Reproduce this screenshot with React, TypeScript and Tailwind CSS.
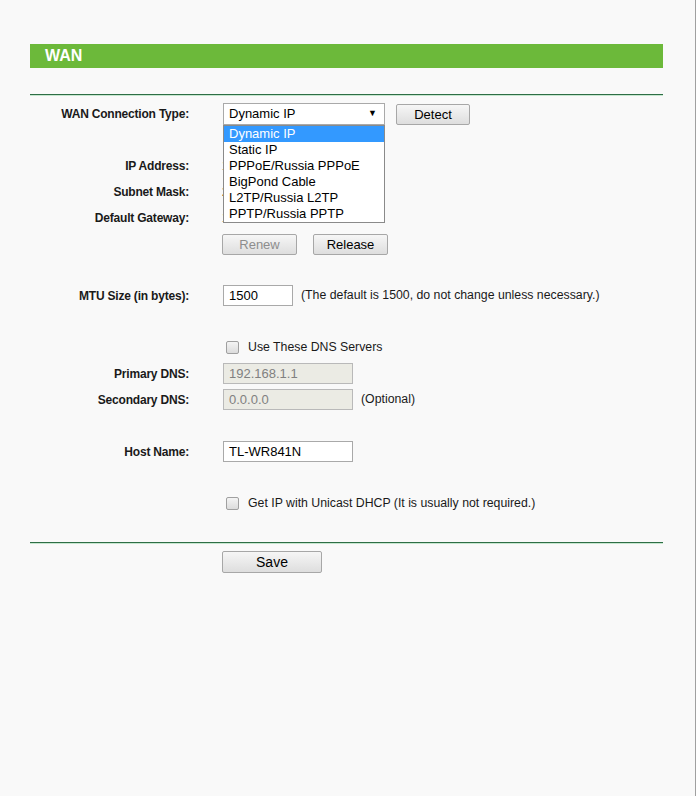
import type { ReactNode } from "react";

const font = { fontFamily: '"Liberation Sans", Arial, sans-serif' };

const connectionTypes = [
  "Dynamic IP",
  "Static IP",
  "PPPoE/Russia PPPoE",
  "BigPond Cable",
  "L2TP/Russia L2TP",
  "PPTP/Russia PPTP",
];

function Label({ children }: { children: ReactNode }) {
  return (
    <div className="w-[159px] shrink-0 text-right text-[12px] font-bold tracking-[-0.2px] text-[#1a1a1a]">
      {children}
    </div>
  );
}

function Row({ label, children, className = "" }: { label?: string; children?: ReactNode; className?: string }) {
  return (
    <div className={`flex items-center ${className}`}>
      <Label>{label}</Label>
      <div className="ml-[34px] flex items-center">{children}</div>
    </div>
  );
}

function Button({ children, disabled, className = "" }: { children: ReactNode; disabled?: boolean; className?: string }) {
  return (
    <button
      className={`h-[21px] rounded-[2px] border border-[#a7a7a7] bg-gradient-to-b from-[#f6f6f6] to-[#dedede] text-[13px] leading-none ${
        disabled ? "text-[#8d8d8d]" : "text-black"
      } ${className}`}
    >
      {children}
    </button>
  );
}

function TextBox({ value, disabled, width = "w-[130px]" }: { value: string; disabled?: boolean; width?: string }) {
  return (
    <div
      className={`flex h-[21px] items-center border px-[5px] text-[13px] ${width} ${
        disabled ? "border-[#b9b9b9] bg-[#ebebe4] text-[#808080]" : "border-[#a9a9a9] bg-white text-black"
      }`}
    >
      {value}
    </div>
  );
}

function CheckBox() {
  return (
    <span className="mx-[3px] block h-[13px] w-[13px] rounded-[2px] border border-[#a0a0a0] bg-gradient-to-b from-[#f4f4f4] to-[#dcdcdc]" />
  );
}

function Note({ children, className = "" }: { children: ReactNode; className?: string }) {
  return <span className={`text-[12.3px] text-[#1a1a1a] ${className}`}>{children}</span>;
}

function Divider() {
  return (
    <div>
      <div className="h-px bg-[#2e6e45]" />
      <div className="h-px bg-[#c6e6cf]" />
    </div>
  );
}

export default function App() {
  return (
    <div className="min-h-[796px] w-full border-r border-[#a0a0a0] bg-[#f9f9f9]" style={font}>
      <div className="ml-[30px] w-[633px] pt-[44px]">
        <div className="flex h-[24px] items-center bg-[#6cb93a] pl-[15px] text-[16px] font-bold text-white">WAN</div>

        <div className="mt-[26px]">
          <Divider />
        </div>

        {/* connection type with the open list */}
        <Row label="WAN Connection Type:" className="mt-[7px] h-[22px]">
          <div className="relative">
            <div className="flex h-[22px] w-[162px] items-center justify-between border border-[#a9a9a9] bg-white pl-[5px] pr-[7px] text-[13px] text-black">
              <span>Dynamic IP</span>
              <span className="text-[9px]">▼</span>
            </div>
            <ul className="absolute left-0 top-[22px] z-10 w-[162px] border border-[#8a8a8a] bg-white text-[13px] leading-[16px] text-black">
              {connectionTypes.map((t, i) => (
                <li key={t} className={`pl-[5px] ${i === 0 ? "bg-[#3399ff] text-white" : ""}`}>
                  {t}
                </li>
              ))}
            </ul>
          </div>
          <Button className="ml-[11px] mt-[1px] w-[74px]">Detect</Button>
        </Row>

        <Row label="IP Address:" className="mt-[31px] h-[20px]">
          <span className="-ml-[1px] text-[12px]">192.168.0.100</span>
        </Row>
        <Row label="Subnet Mask:" className="mt-[6px] h-[20px]">
          <span className="-ml-[1px] text-[12px]">255.255.255.0</span>
        </Row>
        <Row label="Default Gateway:" className="mt-[6px] h-[20px]">
          <span className="-ml-[1px] text-[12px]">192.168.0.1</span>
        </Row>

        <Row className="mt-[6px] h-[21px]">
          <Button disabled className="-ml-[1px] w-[75px]">Renew</Button>
          <Button className="ml-[16px] w-[75px]">Release</Button>
        </Row>

        <Row label="MTU Size (in bytes):" className="mt-[30px] h-[21px]">
          <TextBox value="1500" width="w-[70px]" />
          <Note className="ml-[8px]">(The default is 1500, do not change unless necessary.)</Note>
        </Row>

        <Row className="mt-[31px] h-[20px]">
          <CheckBox />
          <Note className="ml-[6px]">Use These DNS Servers</Note>
        </Row>
        <Row label="Primary DNS:" className="mt-[6px] h-[21px]">
          <TextBox value="192.168.1.1" disabled />
        </Row>
        <Row label="Secondary DNS:" className="mt-[5px] h-[21px]">
          <TextBox value="0.0.0.0" disabled />
          <Note className="ml-[8px]">(Optional)</Note>
        </Row>

        <Row label="Host Name:" className="mt-[31px] h-[21px]">
          <TextBox value="TL-WR841N" />
        </Row>

        <Row className="mt-[31px] h-[20px]">
          <CheckBox />
          <Note className="ml-[6px]">Get IP with Unicast DHCP (It is usually not required.)</Note>
        </Row>

        <div className="mt-[29px]">
          <Divider />
        </div>

        <Row className="mt-[7px] h-[22px]">
          <Button className="-ml-[1px] h-[22px] w-[100px] text-[14px]">Save</Button>
        </Row>
      </div>
    </div>
  );
}
